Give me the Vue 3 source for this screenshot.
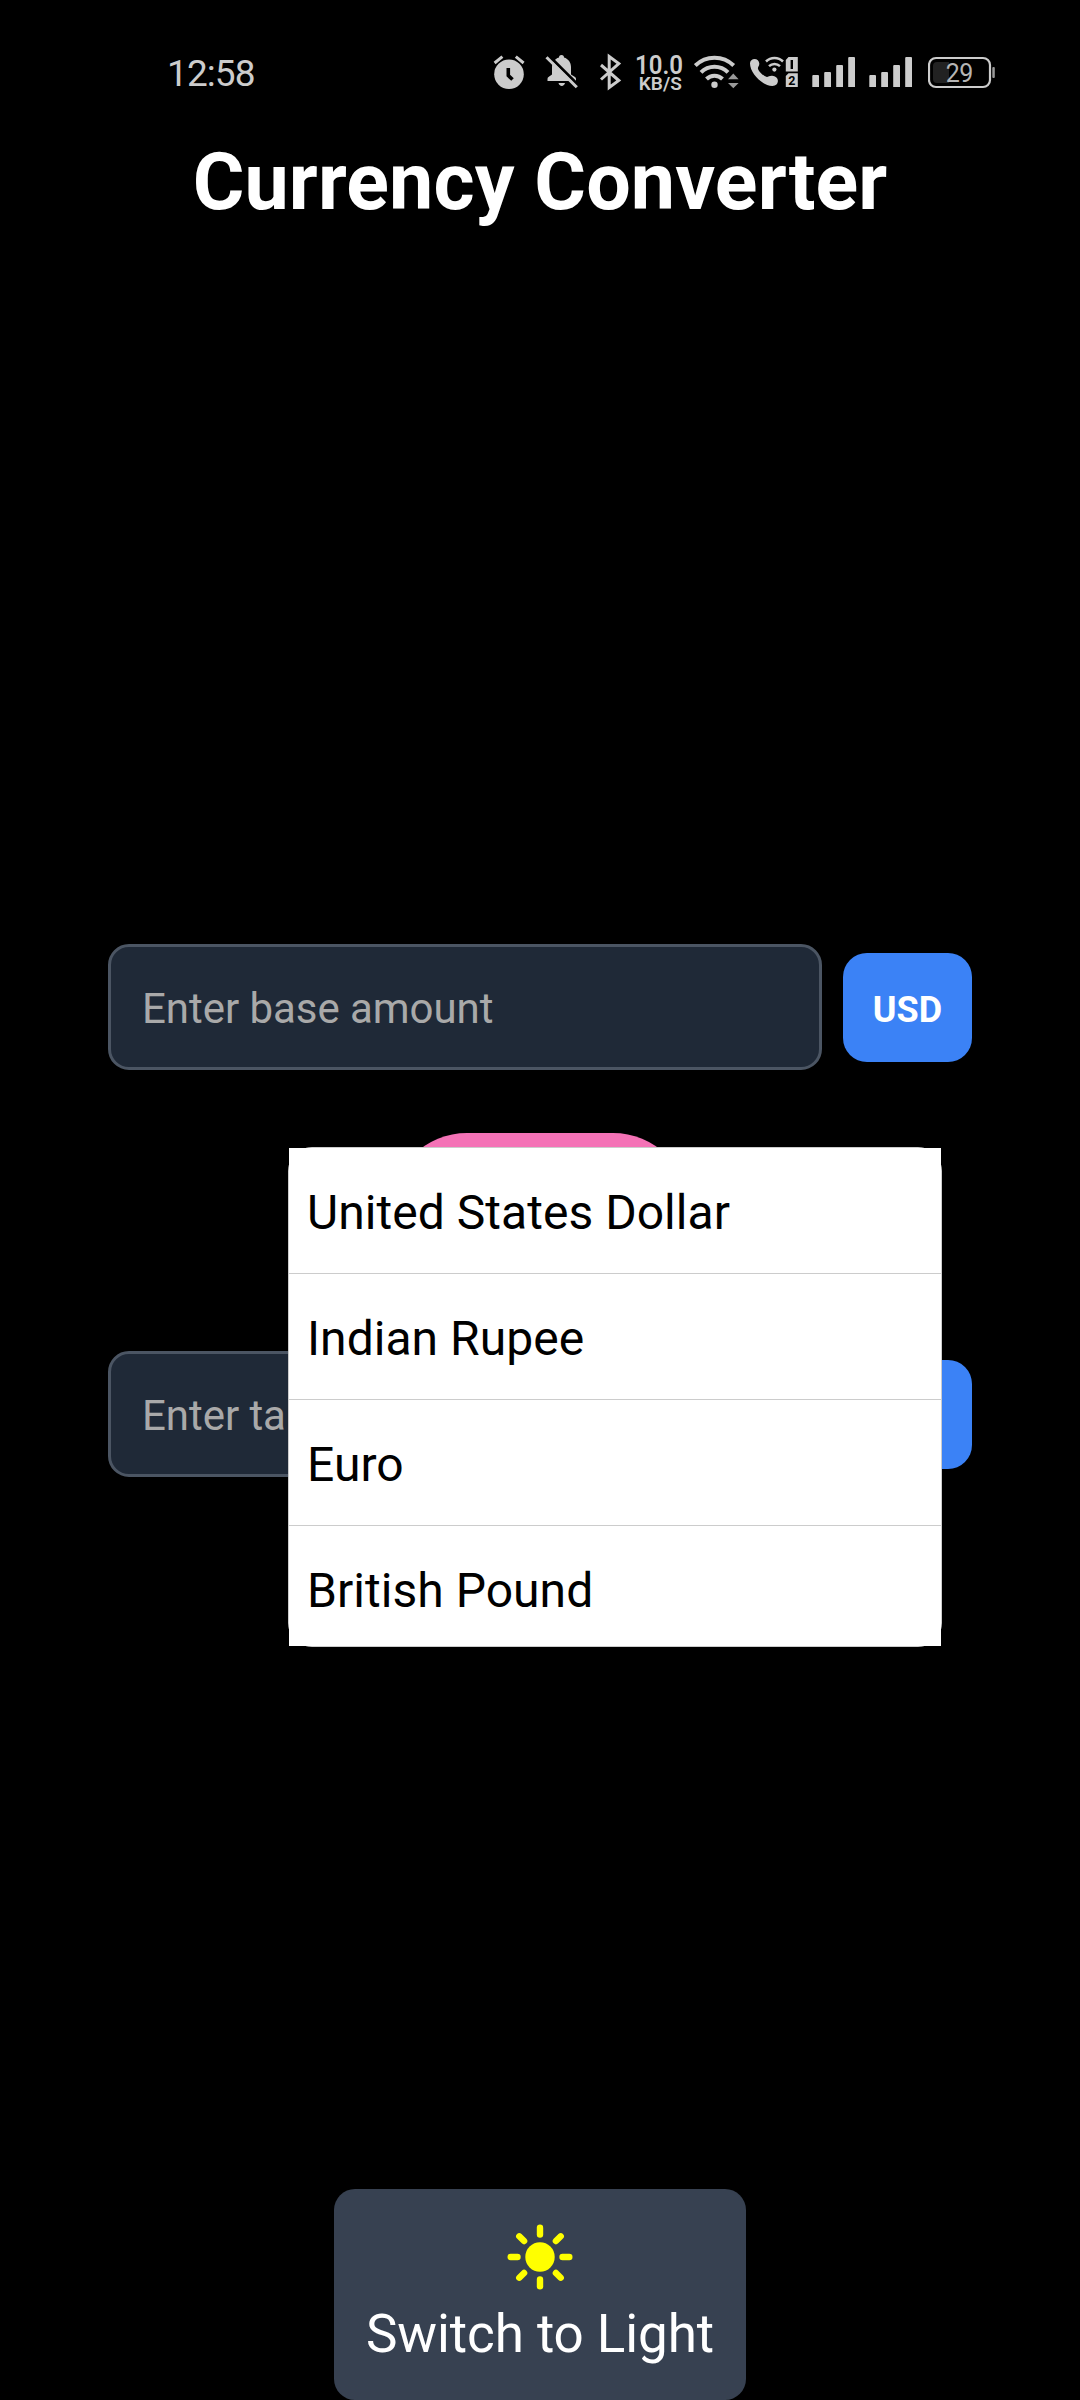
<script setup>
const currencies = ['United States Dollar', 'Indian Rupee', 'Euro', 'British Pound']
const rays = [0, 45, 90, 135, 180, 225, 270, 315]
</script>

<template>
  <div class="screen">
    <header class="status">
      <span class="time">12:58</span>
      <div class="icons">
        <svg class="alarm" width="33" height="42" viewBox="493 50 33 42">
          <circle cx="509" cy="74.2" r="14.8" fill="#ccc" />
          <path d="M494.6 63l7.8-6.4M523.6 63l-7.8-6.4" stroke="#ccc" stroke-width="3" />
          <path d="M508.3 68v7.4l4.2 4.2" fill="none" stroke="#000" stroke-width="3.6" />
        </svg>
        <svg class="bell" width="34" height="42" viewBox="545 50 34 42">
          <path d="M561.5 55c1.800 0 2.500 1.200 2.500 2.400 4.400 1.300 7 5 7 9.600v7.500l4 2.500c.8.600 1 1.200 1 2V81h-28.500v-2c0-.9.300-1.500 1-2l3.500-2.500V67c0-4.600 2.600-8.300 7-9.600 0-1.200.7-2.400 2.500-2.400zM558.500 83h6.500c-.4 1.700-1.600 2.900-3.200 2.900s-2.900-1.200-3.300-2.900z" fill="#ccc" />
          <path d="M548.600 55.500l30.500 30.600" stroke="#000" stroke-width="3" />
          <path d="M546.500 57.300l30.300 30" stroke="#ccc" stroke-width="3" />
        </svg>
        <svg class="bluetooth" width="22" height="42" viewBox="600 50 22 42">
          <path d="M601 65l17.800 15.500-9.600 7V56.500l9.600 7L601 79.500" fill="none" stroke="#ccc" stroke-width="3" />
        </svg>
        <svg class="speed" width="48" height="42" viewBox="635 50 48 42" fill="#ccc">
          <text x="635" y="73.600" font-size="25.500" font-weight="600" textLength="48" lengthAdjust="spacingAndGlyphs">10.0</text>
          <text x="638.800" y="90" font-size="18.300" font-weight="600" textLength="43" lengthAdjust="spacingAndGlyphs">KB/S</text>
        </svg>
        <svg class="wifi" width="45" height="42" viewBox="694 50 45 42">
          <g fill="none" stroke="#ccc" stroke-width="4">
            <path d="M695.300 65.500a27.500 27.500 0 0 1 38.400 0" />
            <path d="M701 72.300a19 19 0 0 1 27 0" />
            <path d="M706.500 79a11.300 11.300 0 0 1 16 0" />
          </g>
          <circle cx="714.500" cy="84.700" r="3.200" fill="#ccc" />
          <path d="M728 79.300l5.300-5.800 5.300 5.800zM728 83l5.300 5.300 5.300-5.300z" fill="#999" />
        </svg>
        <svg class="call" width="50" height="42" viewBox="749 50 50 42">
          <path d="M750 63.300c0-2.800 2.300-4.400 4.500-4.400 2.700 0 4.600 2 4.800 4.600.1 2.400-1.400 3.400-1.400 4.700 0 2.500 6.200 8.700 9 8.700 1.500 0 2.700-1.400 5.300-1.200 3 .200 5.700 2.200 5.700 5 0 2.900-2 5.200-5.500 5.200-10 0-22.400-12.500-22.400-22.600z" fill="#ccc" />
          <g fill="none" stroke="#ccc" stroke-width="2.500">
            <path d="M766 61.500a12 12 0 0 1 17 0" />
            <path d="M769 66.200a8 8 0 0 1 11 0" />
          </g>
          <circle cx="774.400" cy="69.600" r="2.100" fill="#ccc" />
          <path d="M788.500 57h9.300v14.600h-12V60zM788.500 73.200h9.300v13.900h-12V76z" fill="#ccc" />
          <path d="M791.800 60v9" stroke="#000" stroke-width="2.400" />
          <text x="791.900" y="84.800" text-anchor="middle" font-size="12.500" font-weight="700" fill="#000">2</text>
        </svg>
        <svg v-for="n in 2" :key="n" class="signal" width="43" height="42" viewBox="812 50 43 42">
          <path d="M812.300 76a1 1 0 0 1 1-1h4.700a1 1 0 0 1 1 1v11h-6.700zM824.200 73a1 1 0 0 1 1-1h4.800a1 1 0 0 1 1 1v14h-6.800zM836.200 66a1 1 0 0 1 1-1h4.800a1 1 0 0 1 1 1v21h-6.800zM848.200 58a1 1 0 0 1 1-1h4.800a1 1 0 0 1 1 1v29h-6.800z" fill="#ccc" />
        </svg>
        <svg class="battery" width="68" height="42" viewBox="928 50 68 42">
          <rect x="929" y="58" width="61" height="29" rx="7" fill="none" stroke="#ccc" stroke-width="2.200" />
          <path d="M949 62h-12a4 4 0 0 0-4 4v13a4 4 0 0 0 4 4h12z" fill="#222" />
          <rect x="992.300" y="67" width="2.500" height="11" rx="1" fill="#999" />
          <text x="959.300" y="81.600" text-anchor="middle" font-size="25" letter-spacing="-0.500" fill="#b4b4b4">29</text>
        </svg>
      </div>
    </header>

    <h1>Currency Converter</h1>

    <main>
      <div class="row">
        <div class="field">Enter base amount</div>
        <button class="code">USD</button>
      </div>
      <button class="convert"></button>
      <div class="row">
        <div class="field">Enter ta</div>
        <button class="code"></button>
      </div>
    </main>

    <button class="theme">
      <svg width="66" height="66" viewBox="-33 -33 66 66">
        <circle r="14.700" fill="#ff0" />
        <path v-for="r in rays" :key="r" :transform="`rotate(${r})`" d="M0-22.500v-6.800" stroke="#ff0" stroke-width="6.400" stroke-linecap="round" />
      </svg>
      <span>Switch to Light</span>
    </button>

    <div class="popup">
      <ul>
        <li v-for="c in currencies" :key="c">{{ c }}</li>
      </ul>
    </div>
  </div>
</template>

<style>
body { background: #000; }
</style>

<style scoped>
* { box-sizing: border-box; }
.screen {
  position: relative;
  width: 1080px;
  height: 2400px;
  overflow: hidden;
  display: flex;
  flex-direction: column;
  align-items: center;
  background: #000;
  color: #fff;
  font-family: Roboto, "Liberation Sans", sans-serif;
}
button { border: 0; padding: 0; font-family: inherit; color: #fff; }
svg { display: block; flex: none; }
.status {
  width: 100%;
  height: 100px;
  padding: 50px 84px 0 167px;
  display: flex;
  justify-content: space-between;
  color: #ccc;
}
.time { font-size: 37px; line-height: 48px; letter-spacing: -0.9px; }
.icons { display: flex; height: 42px; }
.bell { margin-left: 19px; }
.bluetooth { margin-left: 21px; }
.speed { margin: 0 11px 0 13px; }
.call { margin-left: 10px; }
.signal { margin-left: 13px; }
.signal + .signal { margin-left: 14px; }
.battery { margin-left: 16px; }
h1 { margin: 35px 0 0; font-size: 79px; font-weight: 700; line-height: 94px; letter-spacing: 0.12px; white-space: nowrap; }
main {
  width: 864px;
  margin-top: 715px;
  display: flex;
  flex-direction: column;
  align-items: center;
  gap: 63px;
}
.row { width: 100%; display: flex; align-items: center; gap: 21px; }
.field {
  flex: 1;
  height: 126px;
  padding: 2px 31px 0;
  border: 3px solid #4b5563;
  border-radius: 21px;
  background: #1f2937;
  color: #a9a9a9;
  font-size: 42px;
  line-height: 120px;
  letter-spacing: -0.05px;
  white-space: nowrap;
}
.code {
  width: 129px;
  height: 109px;
  padding-top: 5px;
  border-radius: 24px;
  background: #3b82f6;
  font-size: 36px;
  font-weight: 700;
}
.convert { width: 298px; height: 155px; border-radius: 76px; background: #f472b6; }
.theme {
  width: 412px;
  height: 211px;
  margin-top: auto;
  padding-top: 35px;
  display: flex;
  flex-direction: column;
  align-items: center;
  border-radius: 21px;
  background: #374151;
  font-size: 53px;
  letter-spacing: -0.1px;
  white-space: nowrap;
}
.theme span { line-height: 64px; margin-top: 12px; }
.popup {
  position: absolute;
  left: 288px;
  top: 1147px;
  width: 654px;
  height: 500px;
  border: 1px solid #ccc;
  border-radius: 24px;
}
ul { height: 498px; margin: 0; padding: 0; overflow: hidden; list-style: none; background: #fff; }
li {
  height: 126px;
  padding: 4px 18px 0;
  border-bottom: 1px solid #ccc;
  color: #000;
  font-size: 48px;
  line-height: 122px;
  letter-spacing: 0.04px;
}
</style>
